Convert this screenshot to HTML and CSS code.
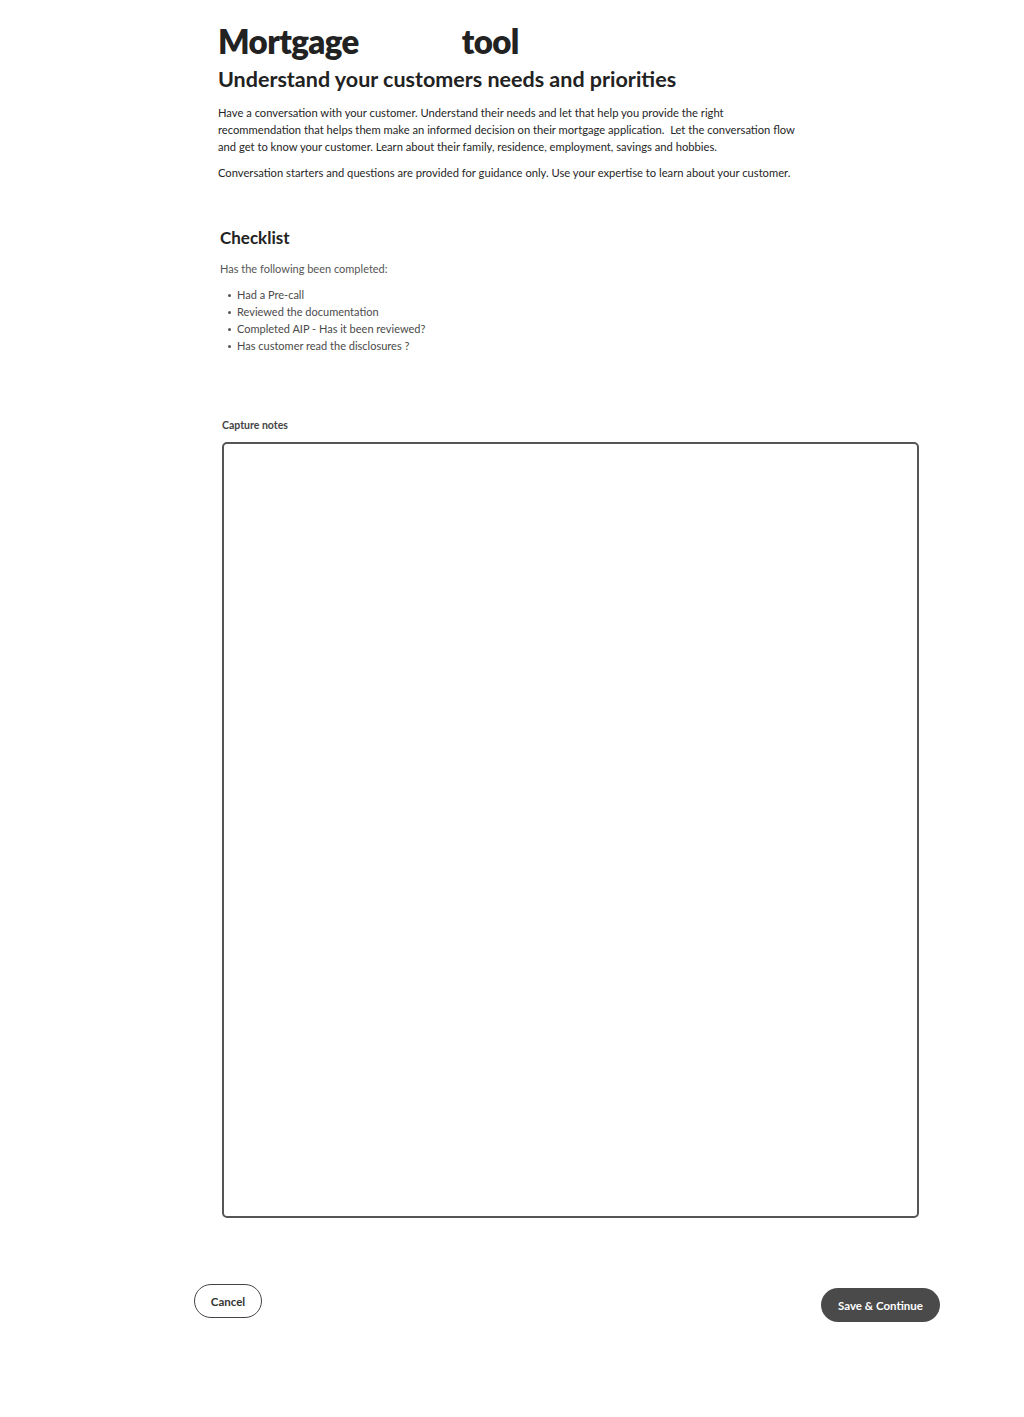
FILE: index.html
```html
<!DOCTYPE html>
<html lang="en">
<head>
<meta charset="utf-8">
<title>Mortgage tool</title>
<link rel="stylesheet" href="styles.css">
</head>
<body>
<main class="page">
  <header class="intro">
    <h1 class="title">Mortgage <span class="title-gap"></span>tool</h1>
    <h2 class="subtitle">Understand your customers needs and priorities</h2>
    <p class="lead">Have a conversation with your customer. Understand their needs and let that help you provide the right recommendation that helps them make an informed decision on their mortgage application.&nbsp; Let the conversation flow and get to know your customer. Learn about their family, residence, employment, savings and hobbies.</p>
    <p class="lead">Conversation starters and questions are provided for guidance only. Use your expertise to learn about your customer.</p>
  </header>

  <section class="checklist">
    <h3 class="checklist-title">Checklist</h3>
    <p class="checklist-intro">Has the following been completed:</p>
    <ul class="checklist-items">
      <li>Had a Pre-call</li>
      <li>Reviewed the documentation</li>
      <li>Completed AIP - Has it been reviewed?</li>
      <li>Has customer read the disclosures ?</li>
    </ul>
  </section>

  <section class="notes">
    <label class="notes-label" for="notes">Capture notes</label>
    <textarea class="notes-input" id="notes"></textarea>
  </section>

  <footer class="actions">
    <button class="btn btn-outline" type="button">Cancel</button>
    <button class="btn btn-solid" type="button">Save &amp; Continue</button>
  </footer>
</main>
</body>
</html>
```
FILE: styles.css
```css
* { box-sizing: border-box; }

body {
  margin: 0;
  background: #fff;
  color: #2b2b2b;
  font-family: Lato, "Open Sans", Arial, sans-serif;
}

.page {
  width: 1024px;
  padding: 22px 0 0 0;
}

.intro {
  padding-left: 218px;
  width: 800px;
}

.title {
  margin: 0;
  font-size: 33px;
  font-weight: 800;
  letter-spacing: -0.6px;
  line-height: 38px;
  color: #222;
}

.title-gap {
  display: inline-block;
  width: 96px;
}

.subtitle {
  margin: 4px 0 0 0;
  font-size: 21.5px;
  font-weight: 700;
  letter-spacing: 0;
  line-height: 30px;
  color: #222;
}

.lead {
  margin: 10px 0 0 0;
  font-size: 11.2px;
  line-height: 17px;
  color: #262626;
}

.lead + .lead {
  margin-top: 9px;
}

.checklist {
  padding-left: 220px;
  margin-top: 45px;
}

.checklist-title {
  margin: 0;
  font-size: 17px;
  font-weight: 700;
  line-height: 24px;
  color: #222;
}

.checklist-intro {
  margin: 11px 0 0 0;
  font-size: 11px;
  line-height: 16px;
  color: #555;
}

.checklist-items {
  list-style: none;
  margin: 9px 0 0 0;
  padding-left: 17px;
  font-size: 11px;
  line-height: 17px;
  color: #4a4a4a;
}

.checklist-items li {
  position: relative;
}

.checklist-items li::before {
  content: "";
  position: absolute;
  left: -9px;
  top: 8px;
  width: 3px;
  height: 3px;
  border-radius: 50%;
  background: #555;
}

.notes {
  padding-left: 222px;
  margin-top: 64px;
  display: flex;
  flex-direction: column;
}

.notes-label {
  font-size: 10.5px;
  font-weight: 700;
  line-height: 14px;
  color: #444;
}

.notes-input {
  margin-top: 10px;
  width: 697px;
  height: 776px;
  border: 2px solid #555;
  border-radius: 5px;
  resize: none;
  font-family: inherit;
  outline: none;
}

.actions {
  display: flex;
  justify-content: space-between;
  align-items: flex-start;
  width: 746px;
  margin: 66px 0 0 194px;
}

.btn {
  font-family: inherit;
  font-size: 11.5px;
  font-weight: 700;
  border-radius: 18px;
  cursor: pointer;
}

.btn-outline {
  width: 68px;
  height: 34px;
  background: #fff;
  border: 1.5px solid #444;
  color: #333;
}

.btn-solid {
  margin-top: 4px;
  width: 119px;
  height: 34px;
  background: #4a4a4a;
  border: none;
  color: #fff;
}
```
